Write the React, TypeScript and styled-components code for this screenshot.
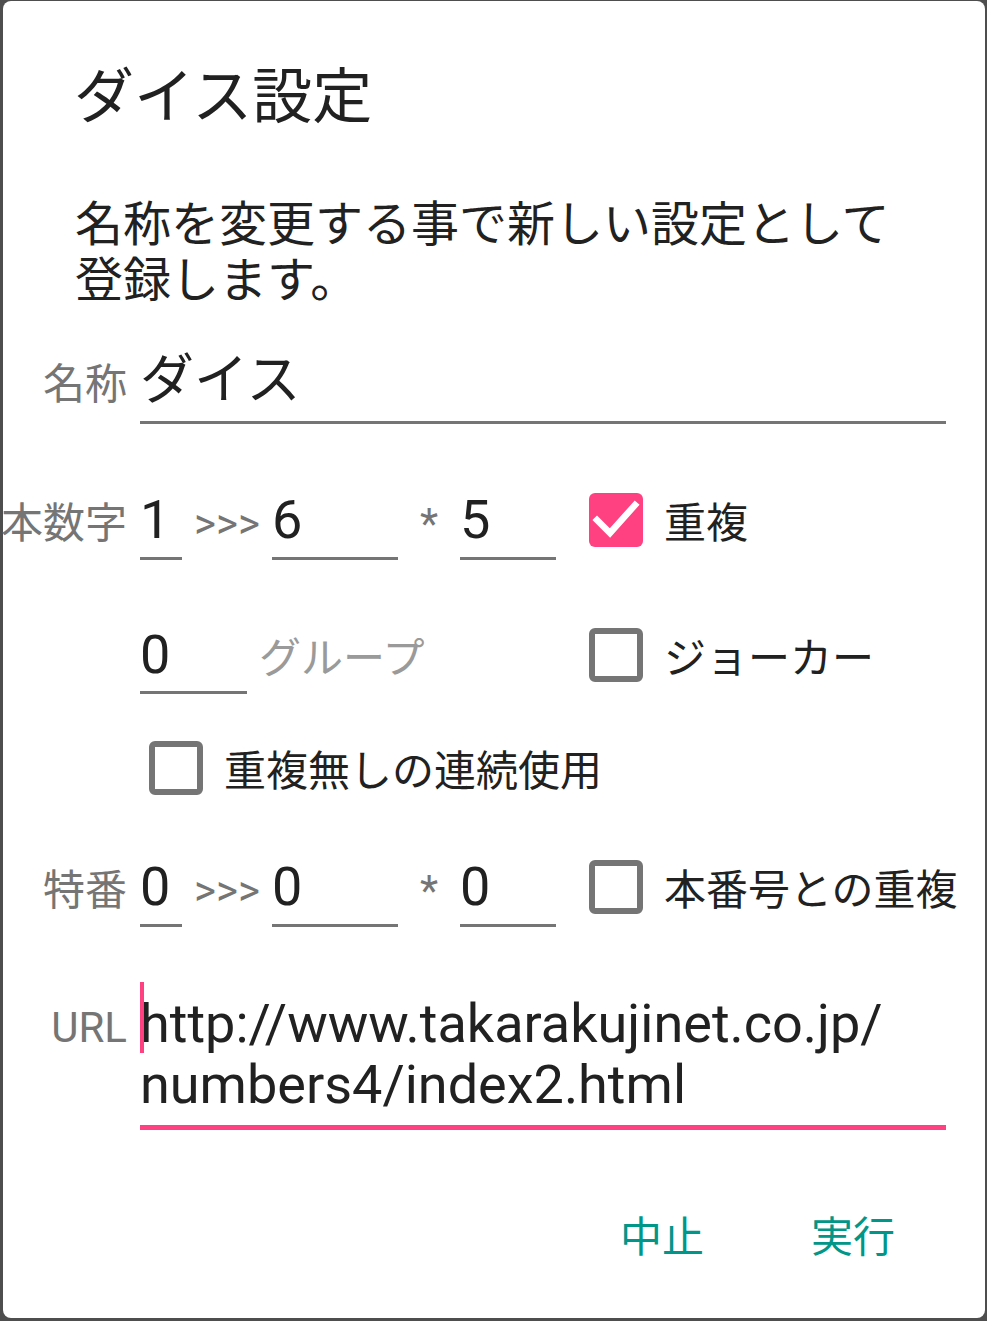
import styled, { createGlobalStyle } from 'styled-components'

const GlobalStyle = createGlobalStyle`
  html, body {
    margin: 0;
    padding: 0;
    background: #4e4e4e;
  }
  body {
    font-family: "Noto Sans CJK JP", sans-serif;
    color: #212121;
  }
`

const jp = `"Noto Sans CJK JP", sans-serif`
const latin = `Roboto, "Noto Sans CJK JP", sans-serif`

const Check: React.FC<{ checked?: boolean; label: string; indent?: number }> = ({ checked, label, indent = 0 }) => (
  <CheckItem $indent={indent}>
    {checked ? (
      <CheckedBox>
        <svg width="54" height="54" viewBox="0 0 54 54">
          <path d="M8 27 L21 40 L46 12" fill="none" stroke="#fff" strokeWidth="6.5" strokeLinecap="square" />
        </svg>
      </CheckedBox>
    ) : (
      <EmptyBox />
    )}
    <CheckLabel>{label}</CheckLabel>
  </CheckItem>
)

const App: React.FC = () => {
  return (
    <>
      <GlobalStyle />
      <Dialog>
        <Title>ダイス設定</Title>
        <Message>名称を変更する事で新しい設定として登録します。</Message>

        <Row $mt={50}>
          <Label>名称</Label>
          <Field $w={806} $pb={13}>ダイス</Field>
        </Row>

        <Row $mt={69}>
          <Label>本数字</Label>
          <Inputs>
            <Field $w={42}>1</Field>
            <Sep $w={90}>&gt;&gt;&gt;</Sep>
            <Field $w={126}>6</Field>
            <Sep $w={62}>*</Sep>
            <Field $w={96}>5</Field>
          </Inputs>
          <Check checked label="重複" />
        </Row>

        <Row $mt={68}>
          <Label />
          <Inputs>
            <Field $w={107}>0</Field>
            <Hint>グループ</Hint>
          </Inputs>
          <Check label="ジョーカー" />
        </Row>

        <Row $mt={47}>
          <Label />
          <Check label="重複無しの連続使用" indent={9} />
        </Row>

        <Row $mt={65}>
          <Label>特番</Label>
          <Inputs>
            <Field $w={42}>0</Field>
            <Sep $w={90}>&gt;&gt;&gt;</Sep>
            <Field $w={126}>0</Field>
            <Sep $w={62}>*</Sep>
            <Field $w={96}>0</Field>
          </Inputs>
          <Check label="本番号との重複" />
        </Row>

        <Row $mt={66}>
          <UrlLabel>URL</UrlLabel>
          <UrlField>
            <Cursor />
            http://www.takarakujinet.co.jp/<wbr />numbers4/index2.html
          </UrlField>
        </Row>

        <Buttons>
          <TextButton>中止</TextButton>
          <TextButton>実行</TextButton>
        </Buttons>
      </Dialog>
    </>
  )
}

const Dialog = styled.div`
  margin: 1px 2px 0 3px;
  height: 1317px;
  box-sizing: border-box;
  background: #fff;
  border-radius: 8px;
  padding-top: 61px;
  display: flex;
  flex-direction: column;
`

const Title = styled.h1`
  margin: 0;
  padding-left: 71px;
  font-family: ${jp};
  font-weight: 400;
  font-size: 60px;
  line-height: 60px;
  color: #212121;
`

const Message = styled.p`
  margin: 70px 0 0;
  padding-left: 72px;
  width: 840px;
  font-family: ${jp};
  font-size: 48px;
  line-height: 56px;
  color: #212121;
`

const Row = styled.div<{ $mt: number }>`
  display: flex;
  align-items: baseline;
  margin-top: ${(p) => p.$mt}px;
`

const Label = styled.div`
  width: 124px;
  flex: none;
  display: flex;
  justify-content: flex-end;
  margin-right: 13px;
  white-space: nowrap;
  font-family: ${jp};
  font-size: 42px;
  line-height: 1;
  color: #757575;
`

const UrlLabel = styled(Label)`
  font-family: ${latin};
`

const Inputs = styled.div`
  width: 449px;
  flex: none;
  display: flex;
  align-items: baseline;
`

const Field = styled.div<{ $w: number; $pb?: number }>`
  width: ${(p) => p.$w}px;
  flex: none;
  padding-bottom: ${(p) => p.$pb ?? 9.5}px;
  border-bottom: 3px solid #757575;
  font-family: ${latin};
  font-size: 54px;
  line-height: 1;
  color: #212121;
  white-space: nowrap;
`

const Sep = styled.div<{ $w: number }>`
  width: ${(p) => p.$w}px;
  flex: none;
  text-align: center;
  font-family: ${latin};
  font-size: 42px;
  line-height: 1;
  color: #757575;
`

const Hint = styled.div`
  margin-left: 12px;
  font-family: ${jp};
  font-size: 42px;
  line-height: 1;
  color: #9a9a9a;
`

const CheckItem = styled.div<{ $indent: number }>`
  display: flex;
  align-items: center;
  align-self: flex-start;
  margin-left: ${(p) => p.$indent}px;
`

const EmptyBox = styled.span`
  width: 54px;
  height: 54px;
  box-sizing: border-box;
  border: 6px solid #757575;
  border-radius: 6px;
  flex: none;
`

const CheckedBox = styled.span`
  width: 54px;
  height: 54px;
  background: #ff4081;
  border-radius: 6px;
  flex: none;
  display: flex;

  svg {
    display: block;
  }
`

const CheckLabel = styled.span`
  margin-left: 21px;
  font-family: ${jp};
  font-size: 42px;
  line-height: 1;
  color: #212121;
  white-space: nowrap;
`

const UrlField = styled.div`
  position: relative;
  width: 806px;
  flex: none;
  padding-bottom: 10px;
  border-bottom: 5px solid #ff4081;
  font-family: ${latin};
  font-size: 54px;
  line-height: 61px;
  color: #212121;
`

const Cursor = styled.span`
  position: absolute;
  left: 0;
  top: -11px;
  width: 4px;
  height: 71px;
  background: #ff4081;
`

const Buttons = styled.div`
  display: flex;
  justify-content: flex-end;
  gap: 107px;
  margin-top: 83px;
  padding-right: 90px;
`

const TextButton = styled.button`
  padding: 0;
  border: none;
  background: none;
  font-family: ${jp};
  font-size: 42px;
  line-height: 42px;
  color: #009688;
`

export default App
